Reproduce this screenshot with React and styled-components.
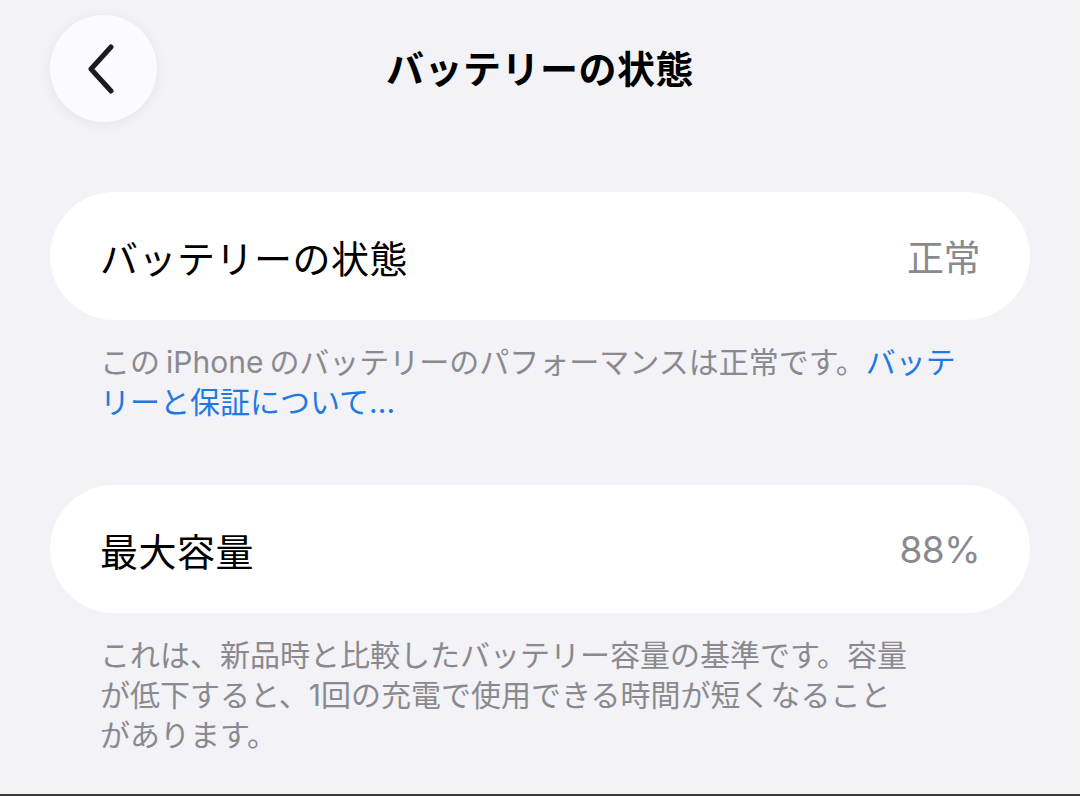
import React from "react";
import styled, { createGlobalStyle } from "styled-components";

const GlobalStyle = createGlobalStyle`
  html, body {
    margin: 0;
    padding: 0;
    background: #f2f2f7;
  }
  body {
    font-family: "Inter", "Noto Sans CJK JP", sans-serif;
    -webkit-font-smoothing: antialiased;
  }
`;

const App = () => {
    return <Page>
        <GlobalStyle/>
        <Header>
            <BackButton aria-label="戻る">
                <svg width="30" height="50" viewBox="0 0 30 50" fill="none">
                    <path d="M25 3 L5 25 L25 47" stroke="#1c1c1e" strokeWidth="5"
                          strokeLinecap="round" strokeLinejoin="round"/>
                </svg>
            </BackButton>
            <Title>バッテリーの状態</Title>
            <HeaderSpacer/>
        </Header>

        <Section>
            <Card>
                <Label>バッテリーの状態</Label>
                <Value>正常</Value>
            </Card>
            <Footnote>
                この<Gap/>iPhone<Gap/>のバッテリーのパフォーマンスは正常です。<Link>バッテ<br/>リーと保証について...</Link>
            </Footnote>
        </Section>

        <Section $last>
            <Card>
                <Label>最大容量</Label>
                <Value>88%</Value>
            </Card>
            <Footnote>
                これは、新品時と比較したバッテリー容量の基準です。容量<br/>
                が低下すると、1回の充電で使用できる時間が短くなること<br/>
                があります。
            </Footnote>
        </Section>
    </Page>
}

const Page = styled.div`
  box-sizing: border-box;
  height: 100vh;
  overflow: hidden;
  padding: 15px 50px 0;
  border-bottom: 2px solid #3a3a3c;
  display: flex;
  flex-direction: column;
`;

const Header = styled.div`
  display: flex;
  align-items: center;
  justify-content: space-between;
  height: 107px;
  margin-bottom: 70px;
  flex-shrink: 0;
`;

const BackButton = styled.button`
  width: 107px;
  height: 107px;
  border-radius: 50%;
  border: none;
  background: #fbfbfd;
  box-shadow: 0 2px 14px rgba(0, 0, 0, 0.06);
  display: flex;
  align-items: center;
  justify-content: center;
  padding: 0 6px 0 0;
  cursor: pointer;
`;

const HeaderSpacer = styled.div`
  width: 107px;
`;

const Title = styled.h1`
  margin: 0 0 4px;
  font-size: 38px;
  font-weight: 700;
  color: #000;
  letter-spacing: 0.5px;
`;

const Section = styled.section`
  display: flex;
  flex-direction: column;
  flex-shrink: 0;
  margin-bottom: ${p => p.$last ? 0 : 63}px;
`;

const Card = styled.div`
  height: 128px;
  border-radius: 64px;
  background: #fff;
  display: flex;
  align-items: center;
  justify-content: space-between;
  padding: 0 50px;
`;

const Label = styled.span`
  font-size: 38px;
  color: #000;
  letter-spacing: 0.5px;
`;

const Value = styled.span`
  font-size: 37px;
  color: #8a8a8e;
  letter-spacing: -0.5px;
`;

const Footnote = styled.p`
  margin: 22px 0 0;
  padding: 0 50px;
  font-size: 30px;
  line-height: 40px;
  color: #8a8a8e;
  white-space: nowrap;
`;

const Gap = styled.span`
  display: inline-block;
  width: 6px;
`;

const Link = styled.span`
  color: #1f7ae0;
`;

export default App
